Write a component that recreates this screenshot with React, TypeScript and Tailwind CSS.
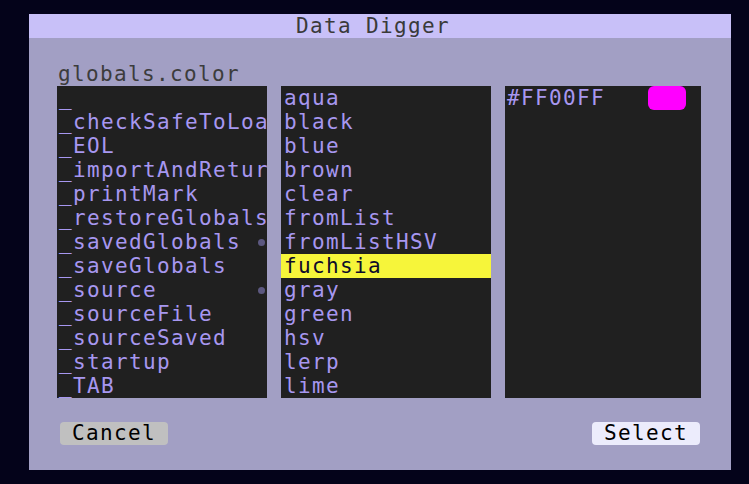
import React from 'react';

const mono = { fontFamily: '"DejaVu Sans Mono", "Liberation Mono", monospace' };

const globalsList = [
  { name: '_' },
  { name: '_checkSafeToLoad' },
  { name: '_EOL' },
  { name: '_importAndReturn' },
  { name: '_printMark' },
  { name: '_restoreGlobals' },
  { name: '_savedGlobals', more: true },
  { name: '_saveGlobals' },
  { name: '_source', more: true },
  { name: '_sourceFile' },
  { name: '_sourceSaved' },
  { name: '_startup' },
  { name: '_TAB' },
];

const colorKeys = [
  'aqua', 'black', 'blue', 'brown', 'clear', 'fromList', 'fromListHSV',
  'fuchsia', 'gray', 'green', 'hsv', 'lerp', 'lime',
];

const selected = 'fuchsia';

const App: React.FC = () => {
  return (
    <div className="w-[749px] h-[484px] bg-[#04031a] pt-[14px] pl-[29px]" style={mono}>
      <div className="w-[702px] h-[456px] bg-[#a29fc4] flex flex-col">
        {/* Title bar */}
        <div className="h-6 bg-[#c8c0f8] flex items-center justify-center pr-[14px] text-[21px] tracking-[1.36px] leading-6 text-[#3a3a3a]">
          Data Digger
        </div>

        <div className="flex-1 flex flex-col pt-6 pl-[28px] pr-[30px]">
          <div className="h-6 leading-6 pl-px text-[21px] tracking-[1.36px] text-[#3c3c3c]">globals.color</div>

          {/* Lists */}
          <div className="flex gap-[14px] h-[312px]">
            <div className="w-[210px] bg-[#202020] overflow-hidden">
              {globalsList.map((item) => (
                <div key={item.name} className="relative h-6 leading-6 pl-[2px] text-[21px] tracking-[1.36px] text-[#a797f0] whitespace-nowrap overflow-hidden">
                  {item.name}
                  {item.more && (
                    <span className="absolute right-[2px] top-[9px] w-[7px] h-[7px] rounded-full bg-[#5c5880]" />
                  )}
                </div>
              ))}
            </div>

            <div className="w-[210px] bg-[#202020] overflow-hidden">
              {colorKeys.map((k) => (
                <div
                  key={k}
                  className={`h-6 leading-6 pl-[3px] text-[21px] tracking-[1.36px] whitespace-nowrap ${
                    k === selected ? 'bg-[#f6f53a] text-[#0e0b2a]' : 'text-[#a797f0]'
                  }`}
                >
                  {k}
                </div>
              ))}
            </div>

            <div className="w-[196px] bg-[#202020] overflow-hidden">
              <div className="h-6 flex items-center justify-between pl-[2px] pr-[15px]">
                <span className="leading-6 text-[21px] tracking-[1.36px] text-[#a797f0]">#FF00FF</span>
                <span className="w-[38px] h-6 rounded-[6px] bg-[#ff00ff]" />
              </div>
            </div>
          </div>

          {/* Buttons */}
          <div className="flex justify-between mt-6 pl-[3px] pr-px">
            <button className="w-[108px] h-[23px] rounded-[4px] bg-[#c0c0c0] text-black text-[21px] tracking-[1.36px] leading-[23px]">
              Cancel
            </button>
            <button className="w-[108px] h-[23px] rounded-[4px] bg-[#ececfc] text-black text-[21px] tracking-[1.36px] leading-[23px]">
              Select
            </button>
          </div>
        </div>
      </div>
    </div>
  );
};

export default App;
